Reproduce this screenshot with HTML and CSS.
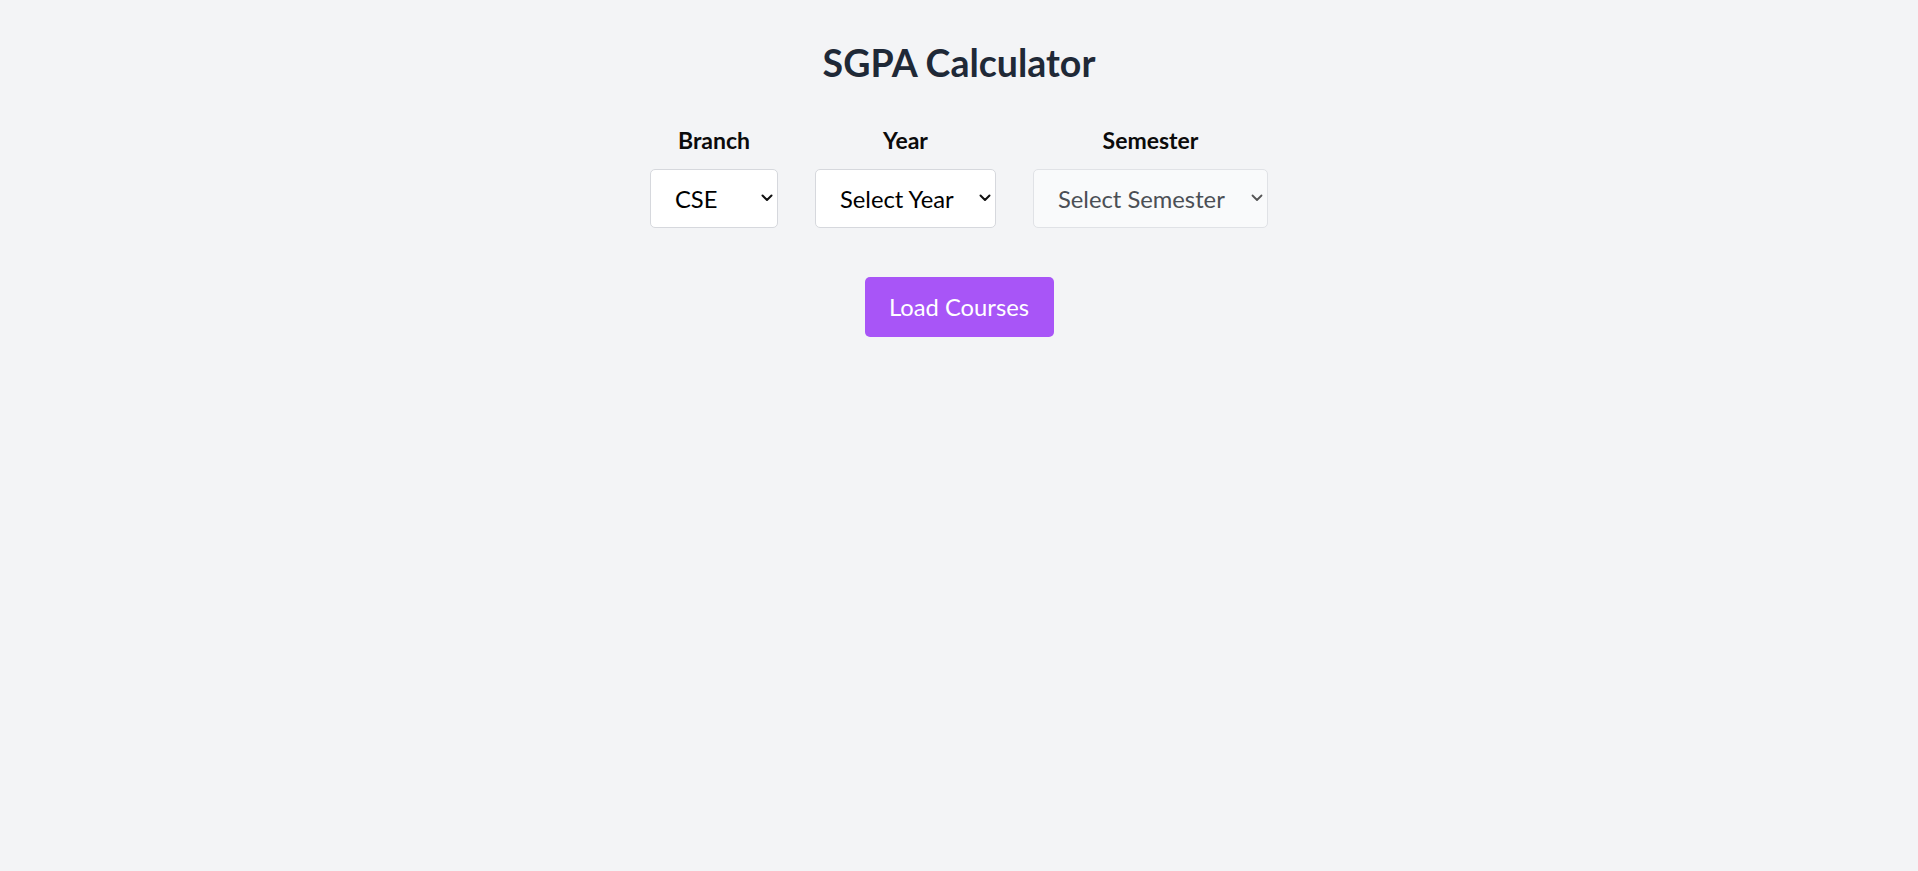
FILE: index.html
```html
<!DOCTYPE html>
<html lang="en">
<head>
<meta charset="utf-8">
<title>SGPA Calculator</title>
<link rel="stylesheet" href="styles.css">
</head>
<body>
<main class="page">
  <h1 class="title">SGPA Calculator</h1>
  <div class="fields">
    <div class="field">
      <label class="label" for="branch">Branch</label>
      <div class="select-wrap">
        <select id="branch" class="select select-branch">
          <option>CSE</option>
          <option>ECE</option>
          <option>MECH</option>
        </select>
        <svg class="chevron" width="12" height="8" viewBox="0 0 12 8"><polyline points="1.5,1.5 6,6 10.5,1.5" fill="none" stroke="#111" stroke-width="2" stroke-linecap="round" stroke-linejoin="round"/></svg>
      </div>
    </div>
    <div class="field">
      <label class="label" for="year">Year</label>
      <div class="select-wrap">
        <select id="year" class="select select-year">
          <option>Select Year</option>
          <option>1</option>
          <option>2</option>
          <option>3</option>
          <option>4</option>
        </select>
        <svg class="chevron" width="12" height="8" viewBox="0 0 12 8"><polyline points="1.5,1.5 6,6 10.5,1.5" fill="none" stroke="#111" stroke-width="2" stroke-linecap="round" stroke-linejoin="round"/></svg>
      </div>
    </div>
    <div class="field">
      <label class="label" for="semester">Semester</label>
      <div class="select-wrap">
        <select id="semester" class="select select-semester is-disabled" disabled>
          <option>Select Semester</option>
        </select>
        <svg class="chevron chevron-muted" width="12" height="8" viewBox="0 0 12 8"><polyline points="1.5,1.5 6,6 10.5,1.5" fill="none" stroke="#555" stroke-width="1.8" stroke-linecap="round" stroke-linejoin="round"/></svg>
      </div>
    </div>
  </div>
  <button class="btn" type="button">Load Courses</button>
</main>
</body>
</html>
```

FILE: styles.css
```css
* {
  box-sizing: border-box;
}

html,
body {
  margin: 0;
  padding: 0;
}

body {
  background: #f3f4f6;
  font-family: Lato, "Open Sans", "Noto Sans", sans-serif;
  color: #111827;
  min-height: 871px;
}

.page {
  display: flex;
  flex-direction: column;
  align-items: center;
  padding-top: 40px;
}

.title {
  margin: 0;
  font-size: 37.5px;
  line-height: 45px;
  font-weight: 700;
  color: #1f2937;
}

.fields {
  display: flex;
  gap: 37px;
  margin-top: 41px;
}

.field {
  display: flex;
  flex-direction: column;
  align-items: center;
  gap: 15px;
}

.label {
  font-size: 23px;
  line-height: 28px;
  font-weight: 700;
  color: #0b0b0b;
}

.select-wrap {
  position: relative;
}

.select {
  appearance: none;
  -webkit-appearance: none;
  display: block;
  height: 59px;
  padding: 0 30px 0 24px;
  font-family: inherit;
  font-size: 23.75px;
  color: #000;
  background: #fff;
  border: 1px solid #d6d8dd;
  border-radius: 5px;
  outline: none;
}

.select-branch {
  width: 128px;
}

.select-year {
  width: 181px;
}

.select-semester {
  width: 235px;
}

.is-disabled {
  background: #f9fafb;
  color: #4b4f55;
  opacity: 1;
  border-color: #e0e2e6;
}

.chevron {
  position: absolute;
  right: 5px;
  top: 50%;
  margin-top: -5px;
  pointer-events: none;
}

.btn {
  margin-top: 49px;
  height: 60px;
  width: 189px;
  padding: 0;
  font-family: inherit;
  font-size: 23.75px;
  color: #fff;
  background: #a855f7;
  border: none;
  border-radius: 5px;
  cursor: pointer;
}
```
